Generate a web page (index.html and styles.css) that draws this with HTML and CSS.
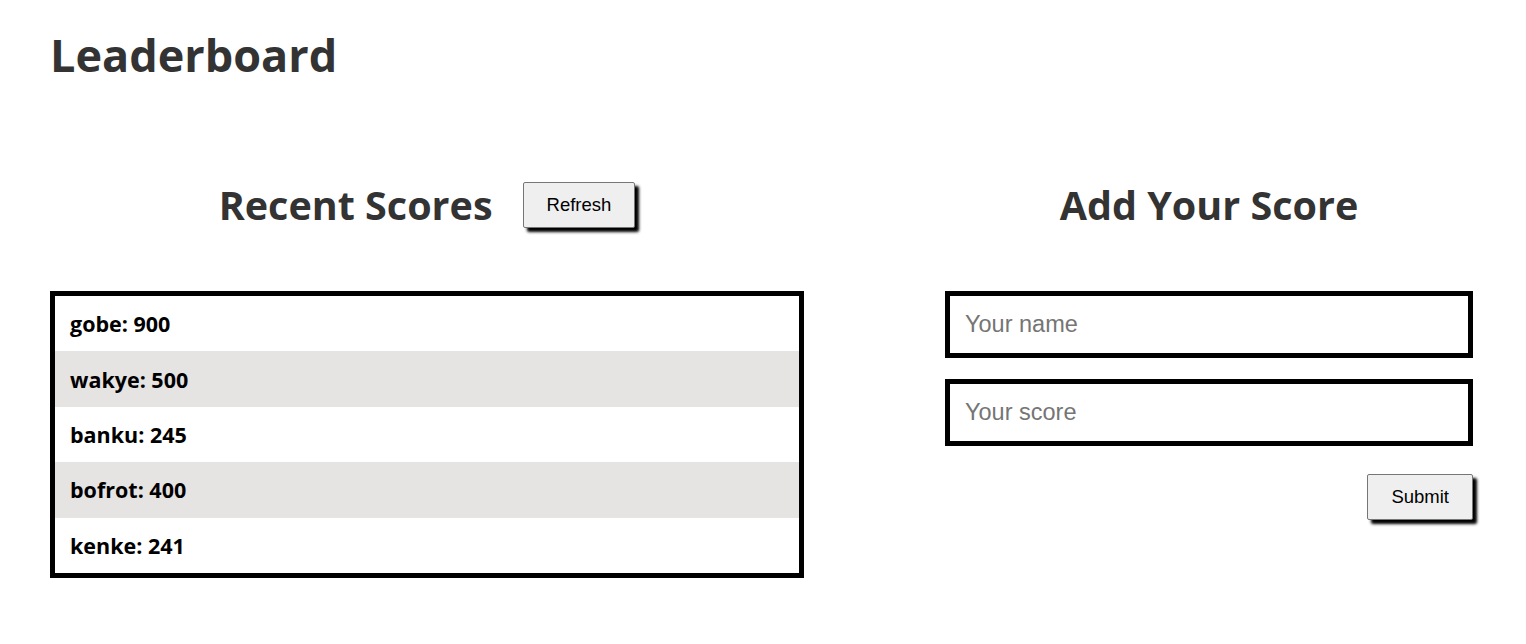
FILE: index.html
```html
<!DOCTYPE html>
<html lang="en">
<head>
<meta charset="utf-8">
<title>Leaderboard</title>
<link rel="stylesheet" href="styles.css">
</head>
<body>
<header class="page-header">
  <h1 class="page-title">Leaderboard</h1>
</header>
<main class="board">
  <section class="scores">
    <div class="section-head">
      <h2 class="section-title">Recent Scores</h2>
      <button class="btn" type="button">Refresh</button>
    </div>
    <ul class="score-list">
      <li class="score-row">gobe: 900</li>
      <li class="score-row">wakye: 500</li>
      <li class="score-row">banku: 245</li>
      <li class="score-row">bofrot: 400</li>
      <li class="score-row">kenke: 241</li>
    </ul>
  </section>
  <section class="add">
    <div class="section-head">
      <h2 class="section-title">Add Your Score</h2>
    </div>
    <form class="add-form">
      <input class="field" type="text" placeholder="Your name">
      <input class="field" type="text" placeholder="Your score">
      <div class="form-actions">
        <button class="btn" type="submit">Submit</button>
      </div>
    </form>
  </section>
</main>
</body>
</html>
```

FILE: styles.css
```css
* { box-sizing: border-box; }

body {
  margin: 0;
  padding: 0 53px 0 50px;
  background: #fff;
  font-family: "Open Sans", "Noto Sans", "Liberation Sans", sans-serif;
  color: #333;
}

.page-header {
  padding-top: 22px;
  height: 160px;
}

.page-title {
  margin: 0;
  font-size: 45px;
  font-weight: 700;
  line-height: 66px;
  color: #333;
}

.board {
  display: grid;
  grid-template-columns: 754px 528px;
  justify-content: space-between;
}

.section-head {
  display: flex;
  align-items: center;
  justify-content: center;
  gap: 30px;
  height: 90px;
  margin-bottom: 41px;
}

.section-title {
  margin: 0;
  font-size: 39.5px;
  font-weight: 700;
  line-height: 50px;
  color: #333;
}

.btn {
  font-family: "Liberation Sans", Arial, sans-serif;
  font-size: 18.5px;
  line-height: 20px;
  padding: 12px 23px;
  color: #000;
  background: #efefef;
  border: 1px solid #767676;
  border-radius: 2px;
  box-shadow: 4px 4px 3px #000;
}

.score-list {
  list-style: none;
  margin: 0;
  padding: 0;
  border: 5px solid #000;
}

.score-row {
  height: 55.4px;
  display: flex;
  align-items: center;
  padding: 0 15px;
  font-size: 21.5px;
  font-weight: 700;
  color: #000;
}

.score-row:nth-child(even) {
  background: #e6e3e3;
}

.add-form {
  display: flex;
  flex-direction: column;
  gap: 21px;
}

.field {
  height: 67px;
  border: 5px solid #000;
  padding: 0 15px;
  font-family: "Liberation Sans", Arial, sans-serif;
  font-size: 23.5px;
  color: #000;
  background: #fff;
  outline: none;
}

.field::placeholder {
  color: #757575;
}

.form-actions {
  display: flex;
  justify-content: flex-end;
  padding-top: 7px;
}
```
